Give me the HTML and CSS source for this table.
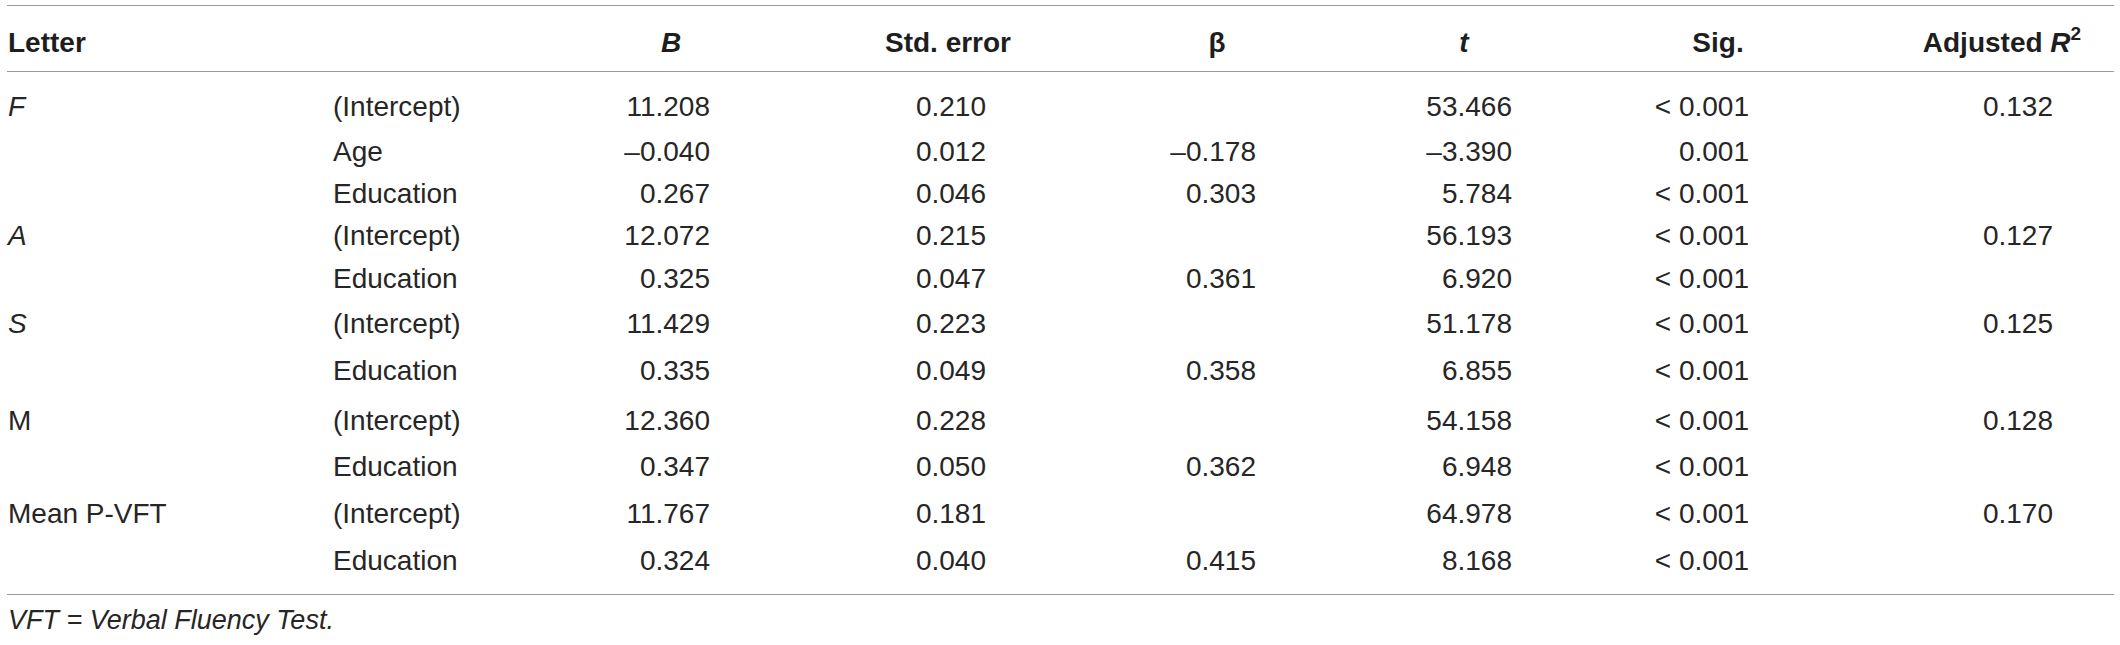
FILE: index.html
```html
<!DOCTYPE html>
<html lang="en">
<head>
<meta charset="utf-8">
<title>Regression table</title>
<link rel="stylesheet" href="styles.css">
</head>
<body>
<div class="wrap">
  <table class="reg">
    <colgroup>
      <col class="w-letter">
      <col class="w-pred">
      <col class="w-b">
      <col class="w-se">
      <col class="w-beta">
      <col class="w-t">
      <col class="w-sig">
      <col class="w-r2">
    </colgroup>
    <thead>
      <tr>
        <th class="c-letter">Letter</th>
        <th class="c-pred"></th>
        <th class="c-b"><i>B</i></th>
        <th class="c-se">Std. error</th>
        <th class="c-beta">β</th>
        <th class="c-t"><i>t</i></th>
        <th class="c-sig">Sig.</th>
        <th class="c-r2">Adjusted <i>R</i><sup>2</sup></th>
      </tr>
    </thead>
    <tbody>
      <tr class="first r45">
        <td class="c-letter"><i>F</i></td><td class="c-pred">(Intercept)</td><td class="c-b">11.208</td><td class="c-se">0.210</td><td class="c-beta"></td><td class="c-t">53.466</td><td class="c-sig">&lt; 0.001</td><td class="c-r2">0.132</td>
      </tr>
      <tr class="r42">
        <td class="c-letter"></td><td class="c-pred">Age</td><td class="c-b">–0.040</td><td class="c-se">0.012</td><td class="c-beta">–0.178</td><td class="c-t">–3.390</td><td class="c-sig">0.001</td><td class="c-r2"></td>
      </tr>
      <tr class="r42">
        <td class="c-letter"></td><td class="c-pred">Education</td><td class="c-b">0.267</td><td class="c-se">0.046</td><td class="c-beta">0.303</td><td class="c-t">5.784</td><td class="c-sig">&lt; 0.001</td><td class="c-r2"></td>
      </tr>
      <tr class="r43">
        <td class="c-letter"><i>A</i></td><td class="c-pred">(Intercept)</td><td class="c-b">12.072</td><td class="c-se">0.215</td><td class="c-beta"></td><td class="c-t">56.193</td><td class="c-sig">&lt; 0.001</td><td class="c-r2">0.127</td>
      </tr>
      <tr class="r45">
        <td class="c-letter"></td><td class="c-pred">Education</td><td class="c-b">0.325</td><td class="c-se">0.047</td><td class="c-beta">0.361</td><td class="c-t">6.920</td><td class="c-sig">&lt; 0.001</td><td class="c-r2"></td>
      </tr>
      <tr class="r47">
        <td class="c-letter"><i>S</i></td><td class="c-pred">(Intercept)</td><td class="c-b">11.429</td><td class="c-se">0.223</td><td class="c-beta"></td><td class="c-t">51.178</td><td class="c-sig">&lt; 0.001</td><td class="c-r2">0.125</td>
      </tr>
      <tr class="r50">
        <td class="c-letter"></td><td class="c-pred">Education</td><td class="c-b">0.335</td><td class="c-se">0.049</td><td class="c-beta">0.358</td><td class="c-t">6.855</td><td class="c-sig">&lt; 0.001</td><td class="c-r2"></td>
      </tr>
      <tr class="r46">
        <td class="c-letter">M</td><td class="c-pred">(Intercept)</td><td class="c-b">12.360</td><td class="c-se">0.228</td><td class="c-beta"></td><td class="c-t">54.158</td><td class="c-sig">&lt; 0.001</td><td class="c-r2">0.128</td>
      </tr>
      <tr class="r47">
        <td class="c-letter"></td><td class="c-pred">Education</td><td class="c-b">0.347</td><td class="c-se">0.050</td><td class="c-beta">0.362</td><td class="c-t">6.948</td><td class="c-sig">&lt; 0.001</td><td class="c-r2"></td>
      </tr>
      <tr class="r47">
        <td class="c-letter">Mean P-VFT</td><td class="c-pred">(Intercept)</td><td class="c-b">11.767</td><td class="c-se">0.181</td><td class="c-beta"></td><td class="c-t">64.978</td><td class="c-sig">&lt; 0.001</td><td class="c-r2">0.170</td>
      </tr>
      <tr class="last">
        <td class="c-letter"></td><td class="c-pred">Education</td><td class="c-b">0.324</td><td class="c-se">0.040</td><td class="c-beta">0.415</td><td class="c-t">8.168</td><td class="c-sig">&lt; 0.001</td><td class="c-r2"></td>
      </tr>
    </tbody>
  </table>
  <p class="note"><i>VFT = Verbal Fluency Test.</i></p>
</div>
</body>
</html>
```
FILE: styles.css
```css
html, body {
  margin: 0;
  padding: 0;
  background: #ffffff;
}

body {
  font-family: "Liberation Sans", Arial, sans-serif;
  font-size: 28px;
  color: #262626;
}

.wrap {
  padding: 5px 0 0 7px;
}

.reg {
  table-layout: fixed;
  width: 2107px;
  border-collapse: separate;
  border-spacing: 0;
}

.w-letter { width: 318px; }
.w-pred { width: 235px; }
.w-b { width: 222px; }
.w-se { width: 332px; }
.w-beta { width: 206px; }
.w-t { width: 288px; }
.w-sig { width: 220px; }
.w-r2 { width: 286px; }

.reg th,
.reg td {
  padding: 0;
  line-height: 32px;
  vertical-align: top;
  white-space: nowrap;
  font-weight: normal;
}

.reg th {
  font-weight: bold;
  text-align: center;
  color: #1e1e1e;
  padding-top: 21px;
  padding-bottom: 12px;
  border-top: 1px solid #9a9a9a;
  border-bottom: 1px solid #9a9a9a;
}

.reg th.c-letter { text-align: left; padding-left: 1px; }
.reg th.c-r2 { padding-left: 62px; }

.reg sup {
  font-size: 0.68em;
  line-height: 0;
  vertical-align: 0.62em;
}

.reg td { text-align: right; }
.reg td.c-letter { text-align: left; padding-left: 1px; }
.reg td.c-pred { text-align: left; padding-left: 8px; }
.reg td.c-b { padding-right: 72px; }
.reg td.c-se { padding-right: 128px; }
.reg td.c-beta { padding-right: 64px; }
.reg td.c-t { padding-right: 96px; }
.reg td.c-sig { padding-right: 79px; }
.reg td.c-r2 { padding-right: 61px; }

.reg tr.r42 td { height: 42px; }
.reg tr.r43 td { height: 43px; }
.reg tr.r45 td { height: 45px; }
.reg tr.r46 td { height: 46px; }
.reg tr.r47 td { height: 47px; }
.reg tr.r50 td { height: 50px; }

.reg tr.first td { padding-top: 19px; }

.reg tr.last td {
  height: 49px;
  border-bottom: 1px solid #9a9a9a;
}

.note {
  margin: 0;
  padding: 9px 0 0 1px;
  line-height: 32px;
  font-size: 27px;
}
```
